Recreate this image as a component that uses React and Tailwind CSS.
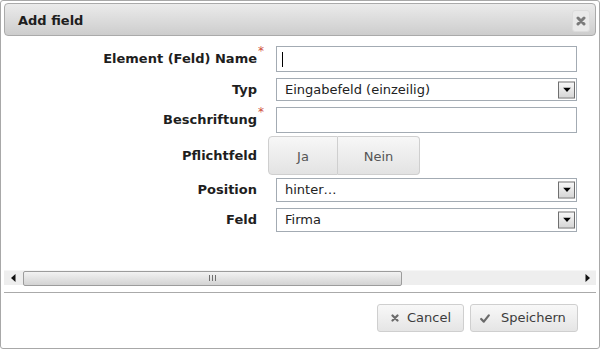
import React from "react";

const font = { fontFamily: '"DejaVu Sans", Verdana, sans-serif' };

function Arrow() {
  return (
    <div className="absolute right-[1px] top-1/2 -translate-y-1/2 w-[17px] h-[17px] border border-[#6f6f6f] bg-gradient-to-b from-[#f7f7f7] to-[#d6d6d6] flex items-center justify-center">
      <svg width="8" height="5" viewBox="0 0 8 5">
        <path d="M0 0 H8 L4 4.5 Z" fill="#000" />
      </svg>
    </div>
  );
}

function Label({ text, req }) {
  return (
    <div className="w-[253px] shrink-0 flex justify-end">
      <span className="relative font-bold text-[13px] text-[#1e1e1e]">
        {text}
        {req && (
          <span className="absolute left-full top-[-7px] ml-[1px] text-[12px] font-normal text-[#d0503c]">*</span>
        )}
      </span>
    </div>
  );
}

function Row({ children, className }) {
  return <div className={"flex items-center " + className}>{children}</div>;
}

export default function App() {
  return (
    <div style={font} className="w-[600px] h-[349px] bg-white border border-[#a8a8a8] rounded-[3px] pt-[2px] px-[3px] flex flex-col overflow-hidden">
      {/* Header */}
      <div className="h-[33px] shrink-0 border border-[#aaaaaa] rounded-[4px] bg-gradient-to-b from-[#ebebeb] to-[#cdcdcd] flex items-start justify-between">
        <div className="pl-[13px] pt-[9px] font-bold text-[13px] text-[#1e1e1e] leading-[16px]">Add field</div>
        <div className="mt-[6px] mr-[5px] w-[18px] h-[22px] rounded-[3px] bg-[#e9e9e9] border border-[#dcdcdc] flex items-center justify-center">
          <svg width="10" height="10" viewBox="0 0 10 10">
            <path d="M2 2 L8 8 M8 2 L2 8" stroke="#7a7a7a" strokeWidth="3" strokeLinecap="round" />
          </svg>
        </div>
      </div>

      {/* Form */}
      <div className="mt-[10px] flex flex-col">
        <Row className="">
          <Label text="Element (Feld) Name" req />
          <div className="ml-[19px] w-[301px] h-[26px] border border-[#a3abb3] bg-white flex items-center pl-[5px]">
            <div className="w-[1px] h-[15px] bg-black" />
          </div>
        </Row>
        <Row className="mt-[6px]">
          <Label text="Typ" />
          <div className="relative ml-[19px] w-[301px] h-[23px] border border-[#a3abb3] bg-white flex items-center pl-[8px] text-[13px] text-[#222]">
            Eingabefeld (einzeilig)
            <Arrow />
          </div>
        </Row>
        <Row className="mt-[6px]">
          <Label text="Beschriftung" req />
          <div className="ml-[19px] w-[301px] h-[26px] border border-[#a3abb3] bg-white" />
        </Row>
        <Row className="mt-[3px]">
          <Label text="Pflichtfeld" />
          <div className="ml-[11px] flex h-[39px]">
            <div className="w-[70px] h-full border border-[#cfcfcf] rounded-l-[4px] bg-gradient-to-b from-[#f7f7f7] to-[#e3e3e3] flex items-center justify-center pt-[3px] text-[13px] text-[#555]">Ja</div>
            <div className="w-[82px] h-full border border-l-0 border-[#cfcfcf] rounded-r-[4px] bg-gradient-to-b from-[#f7f7f7] to-[#e3e3e3] flex items-center justify-center pt-[3px] text-[13px] text-[#555]">Nein</div>
          </div>
        </Row>
        <Row className="mt-[3px]">
          <Label text="Position" />
          <div className="relative ml-[19px] w-[301px] h-[24px] border border-[#a3abb3] bg-white flex items-center pl-[8px] text-[13px] text-[#222]">
            hinter…
            <Arrow />
          </div>
        </Row>
        <Row className="mt-[6px]">
          <Label text="Feld" />
          <div className="relative ml-[19px] w-[301px] h-[24px] border border-[#a3abb3] bg-white flex items-center pl-[8px] text-[13px] text-[#222]">
            Firma
            <Arrow />
          </div>
        </Row>
      </div>

      {/* Scrollbar */}
      <div className="mt-[38px] h-[15px] shrink-0 bg-[#eeeeee] border-t border-[#f6f6f6] flex items-center relative">
        <div className="w-[18px] flex justify-center">
          <svg width="5" height="8" viewBox="0 0 5 8"><path d="M4.5 0 V8 L0 4 Z" fill="#111" /></svg>
        </div>
        <div className="ml-[1px] w-[379px] h-[15px] border border-[#9c9c9c] rounded-[2px] bg-gradient-to-b from-[#f3f3f3] to-[#d3d3d3] flex items-center justify-center">
          <div className="flex gap-[2px] ml-[-1px]">
            <div className="w-[1px] h-[6px] bg-[#6f6f6f]" />
            <div className="w-[1px] h-[6px] bg-[#6f6f6f]" />
            <div className="w-[1px] h-[6px] bg-[#6f6f6f]" />
          </div>
        </div>
        <div className="absolute right-[6px] top-[3px]">
          <svg width="5" height="8" viewBox="0 0 5 8"><path d="M0.5 0 V8 L5 4 Z" fill="#111" /></svg>
        </div>
      </div>

      {/* Separator */}
      <div className="mt-[7px] h-[1px] shrink-0 bg-[#aaaaaa]" />

      {/* Footer */}
      <div className="mt-[11px] flex justify-end gap-[6px] pr-[18px]">
        <div className="w-[87px] h-[28px] border border-[#cfcfcf] rounded-[3px] bg-gradient-to-b from-[#f8f8f8] to-[#e5e5e5] flex items-center pl-[13px] text-[13px] text-[#3c3c3c]">
          <svg width="8" height="8" viewBox="0 0 8 8" className="mr-[8px]">
            <path d="M1.5 1.5 L6.5 6.5 M6.5 1.5 L1.5 6.5" stroke="#6a6a6a" strokeWidth="2.2" strokeLinecap="round" />
          </svg>
          Cancel
        </div>
        <div className="w-[108px] h-[28px] border border-[#cfcfcf] rounded-[3px] bg-gradient-to-b from-[#f8f8f8] to-[#e5e5e5] flex items-center pl-[9px] text-[13px] text-[#3c3c3c]">
          <svg width="10" height="9" viewBox="0 0 10 9" className="mr-[11px]">
            <path d="M1.2 5 L3.8 7.6 L8.8 1.4" fill="none" stroke="#6a6a6a" strokeWidth="2.2" strokeLinecap="round" strokeLinejoin="round" />
          </svg>
          Speichern
        </div>
      </div>
    </div>
  );
}
